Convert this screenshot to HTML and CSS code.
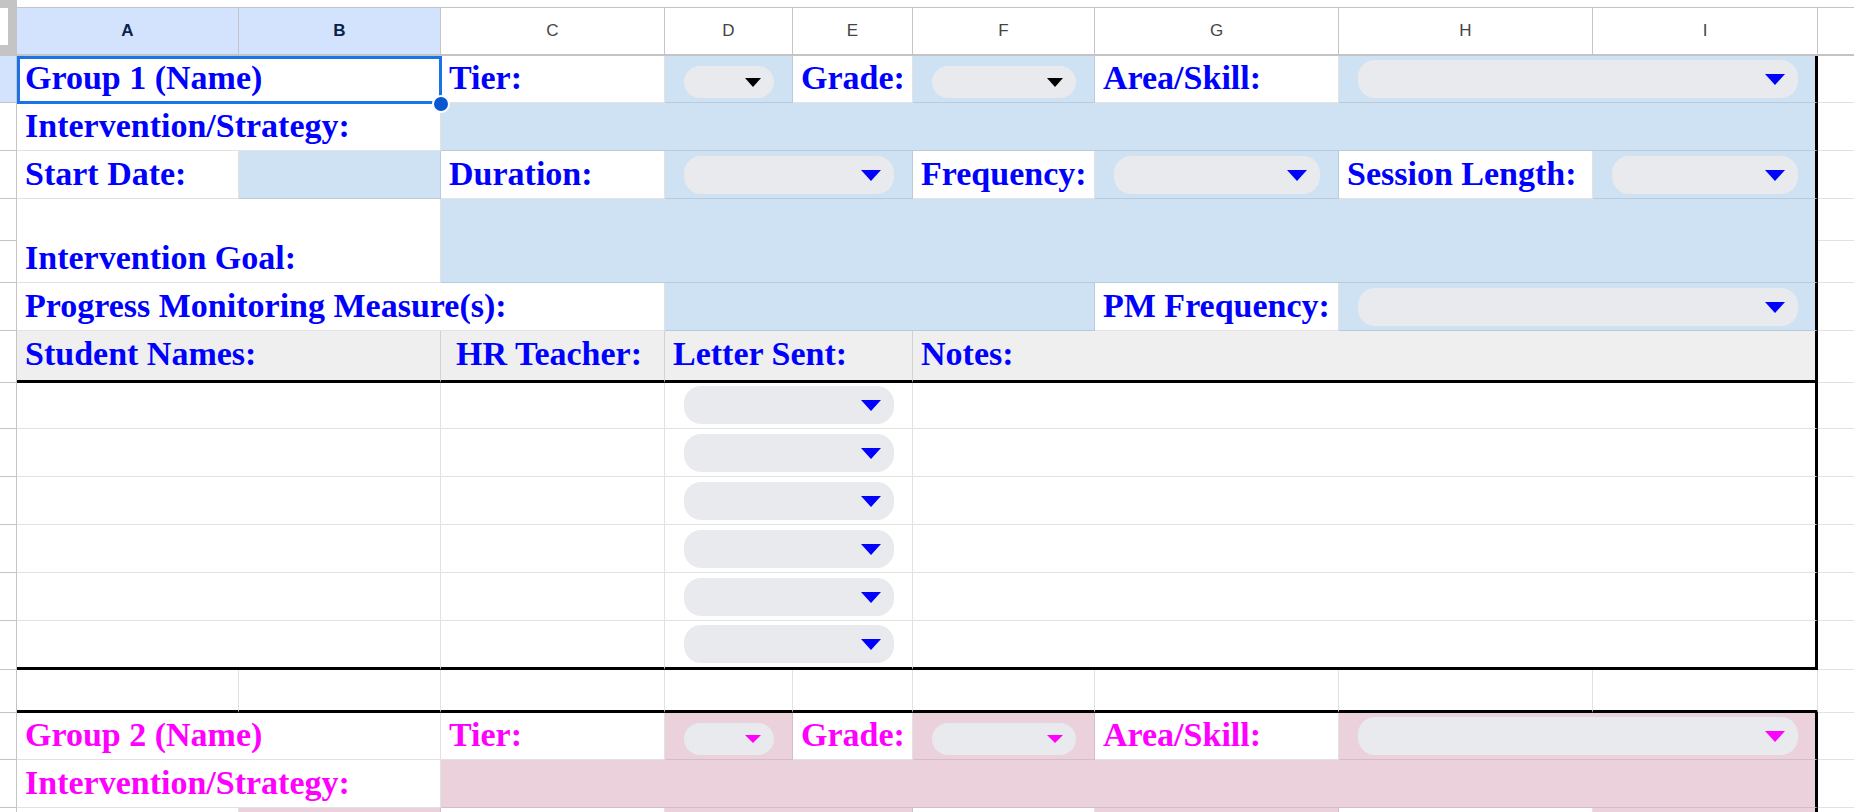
FILE: index.html
```html
<!DOCTYPE html>
<html lang="en">

<head>
    <meta charset="UTF-8">
    <meta name="viewport" content="width=device-width, initial-scale=1.0">
    <title>Intervention Groups</title>
    <link rel="stylesheet" href="styles.css">
</head>

<body>
    <div class="sheet">
        <!-- column headers -->
        <div class="corner"><div class="handle"></div></div>
        <div class="strip"></div>
        <div class="ch on">A</div>
        <div class="ch on">B</div>
        <div class="ch">C</div>
        <div class="ch">D</div>
        <div class="ch">E</div>
        <div class="ch">F</div>
        <div class="ch">G</div>
        <div class="ch">H</div>
        <div class="ch">I</div>
        <div class="ch last"></div>

        <!-- group 1 -->
        <div class="rh on"></div>
        <div class="c lbl s2">Group 1 (Name)</div>
        <div class="c lbl">Tier:</div>
        <div class="c fill dd"><div class="chip short"><span class="arr sm"></span></div></div>
        <div class="c lbl">Grade:</div>
        <div class="c fill dd"><div class="chip short"><span class="arr sm"></span></div></div>
        <div class="c lbl">Area/Skill:</div>
        <div class="c fill dd s2 edge"><div class="chip"><span class="arr"></span></div></div>
        <div class="c out"></div>

        <div class="rh"></div>
        <div class="c lbl s2">Intervention/Strategy:</div>
        <div class="c fill s7 edge"></div>
        <div class="c out"></div>

        <div class="rh"></div>
        <div class="c lbl">Start Date:</div>
        <div class="c fill"></div>
        <div class="c lbl">Duration:</div>
        <div class="c fill dd s2"><div class="chip"><span class="arr"></span></div></div>
        <div class="c lbl">Frequency:</div>
        <div class="c fill dd"><div class="chip"><span class="arr"></span></div></div>
        <div class="c lbl">Session Length:</div>
        <div class="c fill dd edge"><div class="chip"><span class="arr"></span></div></div>
        <div class="c out"></div>

        <div class="rh"></div>
        <div class="c lbl s2 r2">Intervention Goal:</div>
        <div class="c fill s7 r2 edge"></div>
        <div class="c out"></div>
        <div class="rh"></div>
        <div class="c out"></div>

        <div class="rh"></div>
        <div class="c lbl s3">Progress Monitoring Measure(s):</div>
        <div class="c fill s3"></div>
        <div class="c lbl">PM Frequency:</div>
        <div class="c fill dd s2 edge"><div class="chip"><span class="arr"></span></div></div>
        <div class="c out"></div>

        <div class="rh"></div>
        <div class="c lbl gray base s2">Student Names:</div>
        <div class="c lbl gray base indent">HR Teacher:</div>
        <div class="c lbl gray base s2">Letter Sent:</div>
        <div class="c lbl gray base s4 edge">Notes:</div>
        <div class="c out"></div>

        <!-- student rows -->
        <div class="rh"></div>
        <div class="c s2"></div>
        <div class="c"></div>
        <div class="c dd s2"><div class="chip"><span class="arr"></span></div></div>
        <div class="c s4 edge"></div>
        <div class="c out"></div>

        <div class="rh"></div>
        <div class="c s2"></div>
        <div class="c"></div>
        <div class="c dd s2"><div class="chip"><span class="arr"></span></div></div>
        <div class="c s4 edge"></div>
        <div class="c out"></div>

        <div class="rh"></div>
        <div class="c s2"></div>
        <div class="c"></div>
        <div class="c dd s2"><div class="chip"><span class="arr"></span></div></div>
        <div class="c s4 edge"></div>
        <div class="c out"></div>

        <div class="rh"></div>
        <div class="c s2"></div>
        <div class="c"></div>
        <div class="c dd s2"><div class="chip"><span class="arr"></span></div></div>
        <div class="c s4 edge"></div>
        <div class="c out"></div>

        <div class="rh"></div>
        <div class="c s2"></div>
        <div class="c"></div>
        <div class="c dd s2"><div class="chip"><span class="arr"></span></div></div>
        <div class="c s4 edge"></div>
        <div class="c out"></div>

        <div class="rh"></div>
        <div class="c s2 base"></div>
        <div class="c base"></div>
        <div class="c dd s2 base"><div class="chip"><span class="arr"></span></div></div>
        <div class="c s4 edge base"></div>
        <div class="c out"></div>

        <!-- spacer row -->
        <div class="rh"></div>
        <div class="c base"></div>
        <div class="c base"></div>
        <div class="c base"></div>
        <div class="c base"></div>
        <div class="c base"></div>
        <div class="c base"></div>
        <div class="c base"></div>
        <div class="c base"></div>
        <div class="c base"></div>
        <div class="c out"></div>

        <!-- group 2 -->
        <div class="rh"></div>
        <div class="c lbl pk s2">Group 2 (Name)</div>
        <div class="c lbl pk">Tier:</div>
        <div class="c pink dd"><div class="chip short"><span class="arr xs"></span></div></div>
        <div class="c lbl pk">Grade:</div>
        <div class="c pink dd"><div class="chip short"><span class="arr xs"></span></div></div>
        <div class="c lbl pk">Area/Skill:</div>
        <div class="c pink dd s2 edge"><div class="chip"><span class="arr mg"></span></div></div>
        <div class="c out"></div>

        <div class="rh"></div>
        <div class="c lbl pk s2">Intervention/Strategy:</div>
        <div class="c pink s7 edge"></div>
        <div class="c out"></div>

        <!-- next row, only its top edge shows -->
        <div class="rh"></div>
        <div class="c"></div>
        <div class="c pink"></div>
        <div class="c"></div>
        <div class="c pink s2"></div>
        <div class="c"></div>
        <div class="c pink"></div>
        <div class="c"></div>
        <div class="c pink edge"></div>
        <div class="c out"></div>

        <!-- selected range -->
        <div class="selbox"></div>
        <div class="dot"></div>
    </div>
</body>

</html>
```
FILE: styles.css
```css
body {
    margin: 0;
    height: 812px;
    overflow: hidden;
    background-color: white;
}

.sheet {
    position: relative;
    display: grid;
    grid-template-columns: 17px 222px 202px 224px 128px 120px 182px 244px 254px 225px 36px;
    grid-template-rows: 8px 48px 47px 48px 48px 42px 42px 48px 52px 46px 48px 48px 48px 48px 49px 43px 47px 48px 48px;
}

.corner {
    grid-row: span 2;
    background-color: #c4c4c4;
    padding-top: 8px;
    box-sizing: border-box;
    border-bottom: 2px solid #c4c4c4;
}

.handle {
    width: 8px;
    height: 37px;
    background-color: white;
}

.strip {
    grid-column: span 10;
    border-bottom: 1px solid #c4c4c4;
}

.ch {
    display: flex;
    align-items: center;
    justify-content: center;
    box-sizing: border-box;
    border-right: 1px solid #c4c4c4;
    border-bottom: 2px solid #c4c4c4;
    font-family: 'Liberation Sans', Arial, sans-serif;
    font-size: 17px;
    color: #444;
}

.ch.on {
    background-color: #d3e3fd;
    color: #0b1f4a;
    font-weight: bold;
}

.ch.last {
    border-right: none;
}

.rh {
    box-sizing: border-box;
    border-right: 1px solid #c4c4c4;
    border-bottom: 1px solid #c4c4c4;
    background-color: white;
}

.rh.on {
    background-color: #d3e3fd;
}

/* cells */
.c {
    display: flex;
    align-items: flex-end;
    box-sizing: border-box;
    min-width: 0;
    border-right: 1px solid #e2e2e2;
    border-bottom: 1px solid #e2e2e2;
    background-color: white;
}

.c.out {
    border-right: none;
}

.s2 { grid-column: span 2; }
.s3 { grid-column: span 3; }
.s4 { grid-column: span 4; }
.s7 { grid-column: span 7; }
.r2 { grid-row: span 2; }

.lbl {
    padding: 0 8px 7px;
    white-space: nowrap;
    font-family: 'Liberation Serif', 'Times New Roman', serif;
    font-weight: bold;
    font-size: 34px;
    line-height: 1;
    color: #0000ff;
}

.lbl.pk {
    color: #ff00ff;
}

.indent {
    padding-left: 15px;
}

.fill {
    background-color: #cfe2f3;
    border-color: #b9cadb;
}

.pink {
    background-color: #ead1dc;
    border-color: #d4bdc8;
}

.gray {
    background-color: #efefef;
    border-right-color: #d2d2d2;
    padding-bottom: 9px;
}

.c.edge {
    border-right: 3px solid #000;
}

.c.base {
    border-bottom: 3px solid #000;
}

/* dropdown chips */
.dd {
    padding: 0 18px 4px 19px;
}

.dd.edge {
    padding-right: 17px;
}

.chip {
    flex: 1;
    height: 38px;
    border-radius: 17px;
    background-color: #e8eaed;
    display: flex;
    align-items: center;
    justify-content: flex-end;
    padding-right: 13px;
}

.chip.short {
    height: 32px;
    border-radius: 16px;
}

.arr {
    width: 0;
    height: 0;
    border-left: 10px solid transparent;
    border-right: 10px solid transparent;
    border-top: 11px solid #0000ff;
}

.arr.sm {
    border-left-width: 8px;
    border-right-width: 8px;
    border-top: 9px solid #000;
}

.arr.xs {
    border-left-width: 8px;
    border-right-width: 8px;
    border-top: 8px solid #ff00ff;
}

.arr.mg {
    border-top-color: #ff00ff;
}

/* selection */
.selbox {
    position: absolute;
    left: 17px;
    top: 56px;
    width: 425px;
    height: 48px;
    box-sizing: border-box;
    border: 3px solid #1a73e8;
    pointer-events: none;
}

.dot {
    position: absolute;
    left: 432px;
    top: 95px;
    width: 14px;
    height: 14px;
    border-radius: 50%;
    background-color: #0b57d0;
    border: 2px solid white;
}
```
